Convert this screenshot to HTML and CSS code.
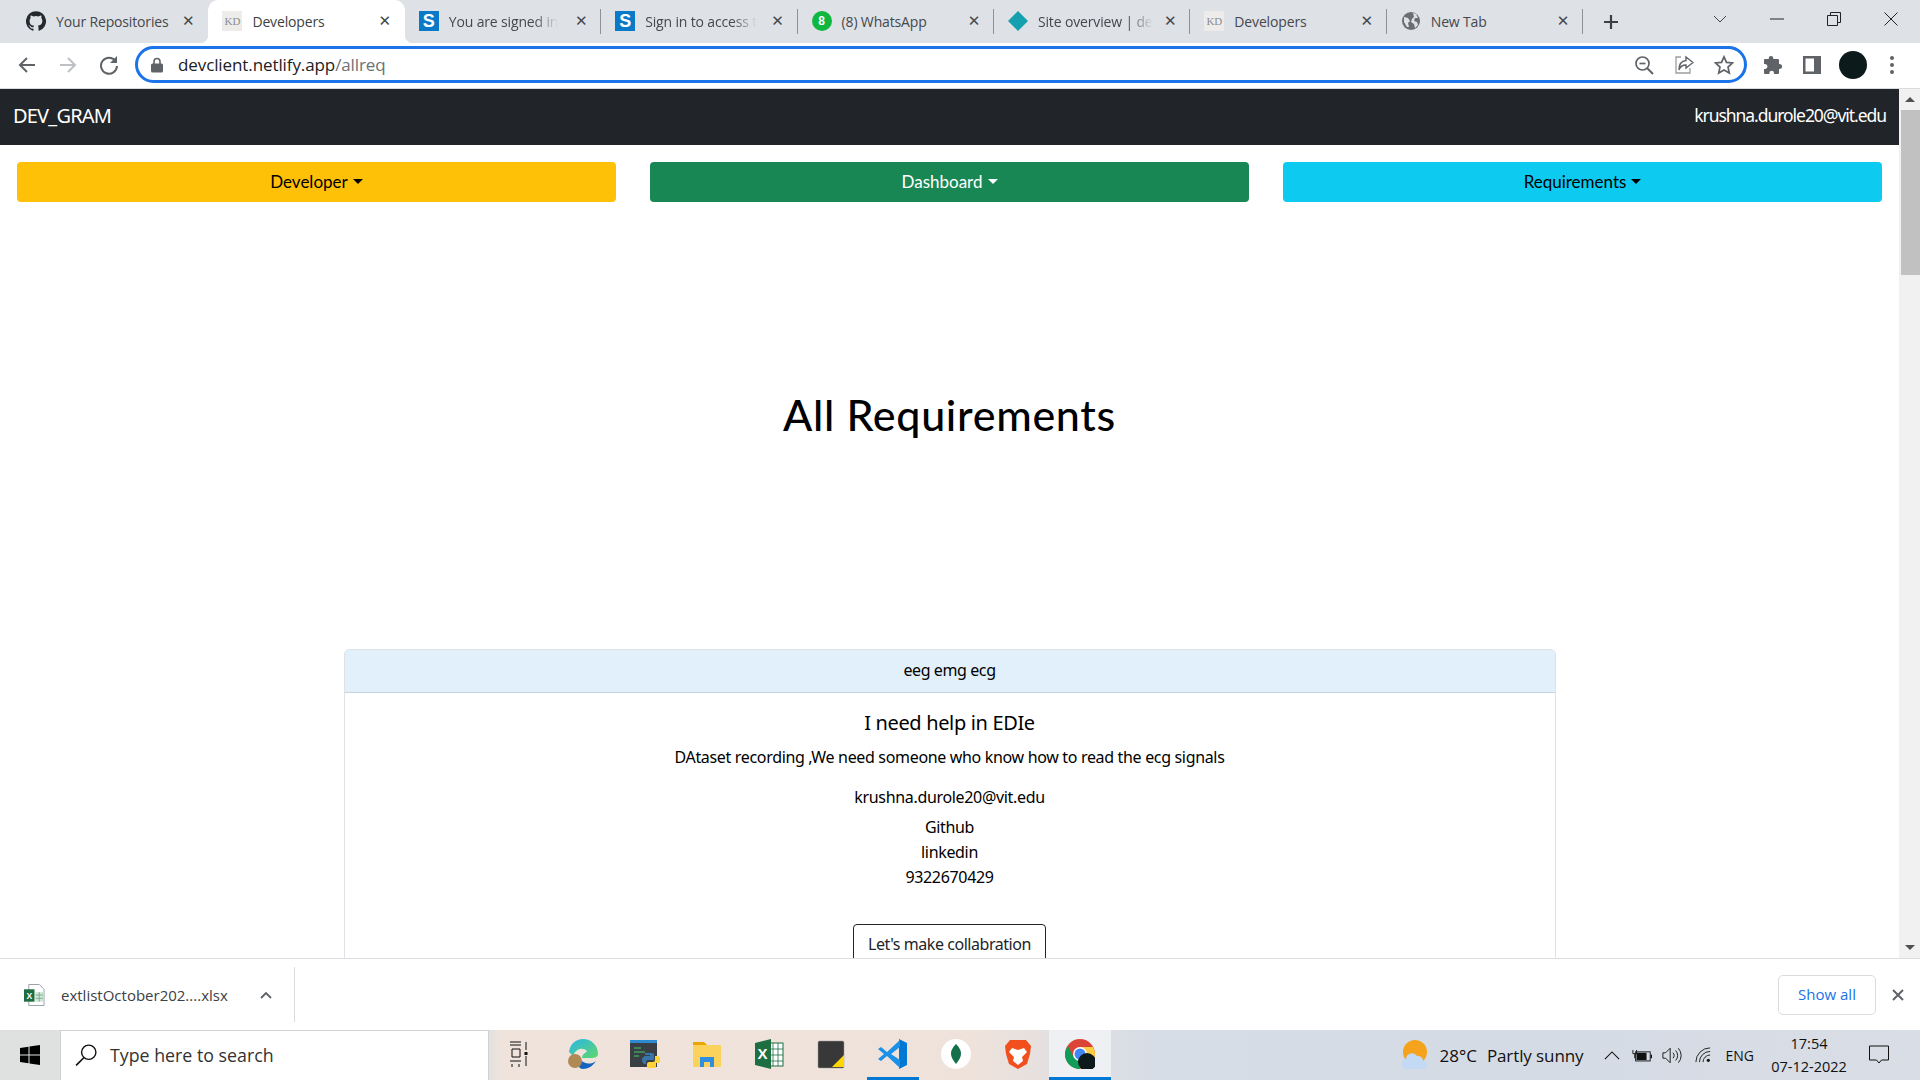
FILE: index.html
```html
<!DOCTYPE html>
<html lang="en">
<head>
<meta charset="utf-8">
<title>Developers</title>
<link rel="stylesheet" href="styles.css">
</head>
<body>
<div class="screen">
  <header class="tabstrip">
    <div class="tab">
      <svg class="fav" viewBox="0 0 24 24"><path fill="#24292e" d="M12 .3a12 12 0 0 0-3.800 23.400c.6.100.8-.3.8-.6v-2c-3.300.7-4-1.600-4-1.600-.6-1.400-1.400-1.800-1.400-1.800-1-.7.1-.7.1-.7 1.200 0 1.900 1.200 1.900 1.200 1 1.800 2.800 1.300 3.500 1 0-.8.4-1.300.7-1.600-2.700-.3-5.500-1.300-5.500-6 0-1.200.5-2.300 1.300-3.100-.2-.4-.6-1.600 0-3.200 0 0 1-.3 3.400 1.200a11.500 11.500 0 0 1 6 0c2.300-1.500 3.300-1.200 3.300-1.200.6 1.600.2 2.800 0 3.200.9.8 1.300 1.900 1.300 3.200 0 4.600-2.800 5.600-5.500 5.900.5.4.9 1 .9 2.200v3.300c0 .3.1.7.8.6A12 12 0 0 0 12 .3"/></svg>
      <span class="tab-title">Your Repositories</span><span class="tab-x">✕</span>
    </div>
    <div class="tab active">
      <span class="fav fav-kd">KD</span>
      <span class="tab-title">Developers</span><span class="tab-x">✕</span>
    </div>
    <div class="tab sep">
      <span class="fav fav-s">S</span>
      <span class="tab-title fade">You are signed in</span><span class="tab-x">✕</span>
    </div>
    <div class="tab sep">
      <span class="fav fav-s">S</span>
      <span class="tab-title fade">Sign in to access t</span><span class="tab-x">✕</span>
    </div>
    <div class="tab sep">
      <span class="fav fav-wa">8</span>
      <span class="tab-title">(8) WhatsApp</span><span class="tab-x">✕</span>
    </div>
    <div class="tab sep">
      <svg class="fav" viewBox="0 0 20 20"><polygon fill="#15a0b0" points="10,0 20,10 10,20 0,10"/></svg>
      <span class="tab-title fade">Site overview | de</span><span class="tab-x">✕</span>
    </div>
    <div class="tab sep">
      <span class="fav fav-kd">KD</span>
      <span class="tab-title">Developers</span><span class="tab-x">✕</span>
    </div>
    <div class="tab sep">
      <svg class="fav" viewBox="0 0 20 20"><circle cx="10" cy="10" r="9" fill="#6b6f74"/><path fill="#dee1e6" d="M3 6l4 1 2 3-2 2 1 4-2 0-3-5zM12 2l3 1 2 4-3 0-1 3 3 1 1 3-3 3-1-4-3-2 1-3 2-2z"/></svg>
      <span class="tab-title">New Tab</span><span class="tab-x">✕</span>
    </div>
    <span class="new-tab">
      <svg class="ico-16" viewBox="0 0 16 16"><path d="M8 1v14M1 8h14" stroke="#3c4043" stroke-width="2.200" fill="none"/></svg>
    </span>
    <div class="win-controls">
      <svg class="win-ico" viewBox="0 0 14 14"><path d="M1 4l6 6 6-6" fill="none" stroke="#444" stroke-width="1"/></svg>
      <svg class="win-ico" viewBox="0 0 14 14"><path d="M0 7h14" fill="none" stroke="#222" stroke-width="1"/></svg>
      <svg class="win-ico" viewBox="0 0 14 14"><path d="M.5 3.500h10v10H.5zM3.500 3.500v-3h10v10h-3" fill="none" stroke="#222" stroke-width="1"/></svg>
      <svg class="win-ico" viewBox="0 0 14 14"><path d="M.5.5l13 13M13.500.5l-13 13" fill="none" stroke="#222" stroke-width="1"/></svg>
    </div>
  </header>

  <div class="toolbar">
    <svg class="tool back" viewBox="0 0 20 20"><path d="M18 10H3M10 3l-7 7 7 7" fill="none" stroke="#5f6368" stroke-width="2"/></svg>
    <svg class="tool fwd" viewBox="0 0 20 20"><path d="M2 10h15M10 3l7 7-7 7" fill="none" stroke="#bdc1c6" stroke-width="2"/></svg>
    <svg class="tool reload" viewBox="0 0 20 20"><path d="M16.500 6A8 8 0 1 0 18 11" fill="none" stroke="#5f6368" stroke-width="2"/><path d="M18 1v7h-7z" fill="#5f6368"/></svg>
    <div class="omnibox">
      <svg class="lock" viewBox="0 0 12 16"><path d="M3 7V4.500a3 3 0 0 1 6 0V7" fill="none" stroke="#5f6368" stroke-width="1.600"/><rect y="6.500" width="12" height="9" rx="1.500" fill="#5f6368"/></svg>
      <span class="url">devclient.netlify.app<span class="url-path">/allreq</span></span>
      <svg class="omni-ico" viewBox="0 0 20 20"><circle cx="8.500" cy="8.500" r="6.500" fill="none" stroke="#5f6368" stroke-width="1.700"/><path d="M13 13l6 6" stroke="#5f6368" stroke-width="2"/><path d="M5.500 8.500h6" stroke="#5f6368" stroke-width="1.700"/></svg>
      <svg class="omni-ico" viewBox="0 0 20 20"><path d="M7 2H2v16h14v-5" fill="none" stroke="#9a9da1" stroke-width="1.300"/><path d="M12 2l7 5.500-7 5.500V10c-4 0-6 2-7 5 0-5 2-9 7-9.500z" fill="none" stroke="#5f6368" stroke-width="1.400"/></svg>
      <svg class="omni-ico" viewBox="0 0 20 20"><path d="M10 1.800l2.500 5.600 6 .6-4.500 4 1.300 6L10 15l-5.300 3 1.300-6-4.500-4 6-.6z" fill="none" stroke="#5f6368" stroke-width="1.700"/></svg>
    </div>
    <svg class="tool puzzle" viewBox="0 0 20 20"><path fill="#5f6368" d="M8 1a2.300 2.300 0 0 1 2.300 2.300V4H15a1 1 0 0 1 1 1v4h.7a2.500 2.500 0 0 1 0 5H16v4a1 1 0 0 1-1 1h-4v-1a2.300 2.300 0 0 0-4.600 0v1H2a1 1 0 0 1-1-1v-4h1a2.500 2.500 0 0 0 0-5H1V5a1 1 0 0 1 1-1h3.700v-.7A2.300 2.300 0 0 1 8 1z"/></svg>
    <svg class="tool panel" viewBox="0 0 20 20"><path fill="#5f6368" d="M1 1h18v18H1zM3.500 3.500v13H12v-13z" fill-rule="evenodd"/></svg>
    <span class="avatar"></span>
    <svg class="tool dots" viewBox="0 0 6 20"><circle cx="3" cy="3" r="2" fill="#5f6368"/><circle cx="3" cy="10" r="2" fill="#5f6368"/><circle cx="3" cy="17" r="2" fill="#5f6368"/></svg>
  </div>

  <div class="viewport">
    <main class="page">
      <nav class="navbar">
        <span class="brand">DEV_GRAM</span>
        <span class="nav-user">krushna.durole20@vit.edu</span>
      </nav>
      <div class="menu-row">
        <button class="menu-btn yellow">Developer<i class="caret"></i></button>
        <button class="menu-btn green">Dashboard<i class="caret"></i></button>
        <button class="menu-btn cyan">Requirements<i class="caret"></i></button>
      </div>
      <h1 class="page-title">All Requirements</h1>
      <section class="card">
        <div class="card-head">eeg emg ecg</div>
        <div class="card-body">
          <h5 class="card-title">I need help in EDIe</h5>
          <p class="card-desc">DAtaset recording ,We need someone who know how to read the ecg signals</p>
          <p class="card-mail">krushna.durole20@vit.edu</p>
          <p class="card-line">Github</p>
          <p class="card-line">linkedin</p>
          <p class="card-line">9322670429</p>
          <button class="collab">Let's make collabration</button>
        </div>
      </section>
    </main>
    <div class="scrollbar">
      <span class="sb-btn"><i class="sb-up"></i></span>
      <span class="sb-thumb"></span>
      <span class="sb-track"></span>
      <span class="sb-btn"><i class="sb-down"></i></span>
    </div>
  </div>

  <div class="downloads">
    <svg class="xl-file" viewBox="0 0 22 24"><path d="M5 1h11l5 5v17H5z" fill="#fff" stroke="#9aa0a6"/><path d="M12 9h8v10h-8z" fill="#cfe6d6"/><path d="M12 12h8M12 15.500h8M16 9v10" stroke="#7fb08f"/><rect y="6" width="11" height="13" fill="#1d6f42"/><text x="5.500" y="16" class="xl-x">X</text></svg>
    <span class="dl-name">extlistOctober202....xlsx</span>
    <svg class="dl-chev" viewBox="0 0 12 8"><path d="M1 7l5-5 5 5" fill="none" stroke="#5f6368" stroke-width="1.800"/></svg>
    <span class="dl-sep"></span>
    <button class="show-all">Show all</button>
    <svg class="dl-close" viewBox="0 0 12 12"><path d="M1 1l10 10M11 1L1 11" stroke="#5f6368" stroke-width="2"/></svg>
  </div>

  <footer class="taskbar">
    <svg class="start" viewBox="0 0 20 20"><path fill="#000" d="M0 3l8.500-1.300V9.500H0zM9.500 1.500L20 0v9.500H9.500zM0 10.500h8.500v7.800L0 17zM9.500 10.500H20V20L9.500 18.500z"/></svg>
    <div class="search">
      <svg class="search-ico" viewBox="0 0 20 20"><circle cx="12.500" cy="7.500" r="6.500" fill="none" stroke="#111" stroke-width="1.300"/><path d="M8 12.500L1 19.500" stroke="#111" stroke-width="1.500"/></svg>
      <span>Type here to search</span>
    </div>
    <div class="task-icons">
      <span class="task first"><svg class="tb" viewBox="0 0 20 30"><path d="M1 3h11M1 6h11M3 10h8v8H3zM1 22h11M3 25v3M10 25v3M17 3v8M17 17v10" stroke="#111" stroke-width="1" fill="none"/><rect x="15.500" y="13" width="3" height="3" fill="#111"/></svg></span>
      <span class="task"><svg class="tb" viewBox="0 0 30 30"><defs><linearGradient id="eg" x1="0" y1="0" x2="1" y2="1"><stop offset="0" stop-color="#29b6e8"/><stop offset="1" stop-color="#5fd86b"/></linearGradient></defs><path fill="url(#eg)" d="M1 13C2 5 8 0 15 0c8 0 15 6 15 15 0 3-3 4-7 4h-9c0-4 4-5 5-7-4-4-11-3-14 5z"/><path fill="#1565c0" d="M13 21c3 4 10 5 15 1-3 5-8 8-13 8-2 0-3-1-4-2z"/><circle cx="7" cy="22" r="7" fill="#b08a55"/></svg></span>
      <span class="task"><svg class="tb" viewBox="0 0 30 30"><rect y="1" width="27" height="27" fill="#3a3f44"/><rect y="1" width="27" height="3" fill="#2b8ad0"/><path d="M4 9h7M4 13h11M4 17h5" stroke="#3f9f5f" stroke-width="1.500"/><path fill="#3776ab" d="M15 14h7a2 2 0 0 1 2 2v5h-6a2 2 0 0 0-2 2v2h-2a4 4 0 0 1-2-4c0-3 2-4 4-4h4v-1h-5z"/><path fill="#ffd43b" d="M18 29h6a2 2 0 0 0 2-2v-3h2c2 0 2-2 2-4 0-2-1-3-3-3h-2v4a2 2 0 0 1-2 2h-4a2 2 0 0 0-2 2v3z"/></svg></span>
      <span class="task"><svg class="tb" viewBox="0 0 30 30"><path fill="#e8a600" d="M1 3h11l3 3H1z"/><rect x="1" y="6" width="28" height="22" rx="1" fill="#fbd35c"/><path fill="#2f8ee0" d="M8 28V18h14v10h-4v-5h-6v5z"/></svg></span>
      <span class="task"><svg class="tb" viewBox="0 0 30 30"><rect x="14" y="4" width="15" height="23" fill="#fff" stroke="#1d6f42"/><path d="M19 4v23M24 4v23M14 10h15M14 16h15M14 22h15" stroke="#1d6f42" stroke-width=".8"/><path fill="#1d6f42" d="M1 4L17 0v30L1 26z"/><text x="8.500" y="20" class="xl-big">X</text></svg></span>
      <span class="task"><svg class="tb" viewBox="0 0 30 30"><rect x="2" y="2" width="26" height="27" rx="1.500" fill="#383838" stroke="#999" stroke-width=".5"/><path fill="#ffd600" d="M16 28h12V16z"/></svg></span>
      <span class="task running"><svg class="tb" viewBox="0 0 30 30"><path fill="#0078d4" d="M21 0l8 4v22l-8 4z"/><path fill="#1a90e8" d="M22 1L9 13 3 8 0 10l6 5-6 5 3 2 6-5 13 12V21l-9-6 9-7z"/></svg></span>
      <span class="task"><svg class="tb" viewBox="0 0 30 30"><circle cx="15" cy="15" r="15" fill="#fff"/><path fill="#13704a" d="M15 5c4 4 5 7 5 10s-2 6-5 10c-3-4-5-7-5-10s1-6 5-10z"/></svg></span>
      <span class="task"><svg class="tb" viewBox="0 0 30 30"><path fill="#f1501e" d="M7 1h16l5 6-1 8-3 10-9 5-9-5L3 15 2 7z"/><path fill="#fff" d="M9 9l6 2 6-2 3 4-5 5 1 4-5 4-5-4 1-4-5-5z"/></svg></span>
      <span class="task current"><svg class="tb" viewBox="0 0 30 30"><circle cx="15" cy="15" r="15" fill="#db4437"/><path fill="#0f9d58" d="M0 15c0 8 6 15 15 15l6-11H9L3 7a15 15 0 0 0-3 8z"/><path fill="#ffcd40" d="M15 30a15 15 0 0 0 15-15c0-3-1-5-2-7H15l6 11z"/><circle cx="15" cy="15" r="7" fill="#fff"/><circle cx="15" cy="15" r="5.500" fill="#4285f4"/><circle cx="22" cy="23" r="9" fill="#0c1a1c"/></svg></span>
    </div>
    <div class="tray">
      <svg class="weather" viewBox="0 0 28 30"><circle cx="14" cy="12" r="12" fill="#f5a31c"/><path fill="#c4daf4" d="M6 29a5 5 0 0 1-1-10 6 6 0 0 1 11-3 5 5 0 0 1 6 5 4 4 0 0 1 0 8z"/></svg>
      <span class="temp">28°C</span>
      <span class="wtext">Partly sunny</span>
      <svg class="tray-caret" viewBox="0 0 18 10"><path d="M1 9l8-8 8 8" fill="none" stroke="#111" stroke-width="1.200"/></svg>
      <svg class="tray-bat" viewBox="0 0 22 14"><path d="M1 1v4h4V1M3 5v5" stroke="#111" fill="none"/><rect x="4" y="3" width="16" height="10" fill="none" stroke="#111"/><rect x="5" y="4" width="11" height="8" fill="#111"/><rect x="20.500" y="6" width="1.500" height="4" fill="#111"/></svg>
      <svg class="tray-vol" viewBox="0 0 22 18"><path d="M1 6h3l5-5v16l-5-5H1z" fill="none" stroke="#111"/><path d="M12 6a4 4 0 0 1 0 6M15 3.500a8 8 0 0 1 0 11M18 1a12 12 0 0 1 0 16" fill="none" stroke="#111"/></svg>
      <svg class="tray-wifi" viewBox="0 0 18 18"><path d="M1 17A16 16 0 0 1 17 1M5 17A12 12 0 0 1 17 5M9 17a8 8 0 0 1 8-8" fill="none" stroke="#111"/><circle cx="15" cy="15" r="1.800" fill="#111"/></svg>
      <span class="eng">ENG</span>
      <div class="clock"><span>17:54</span><span>07-12-2022</span></div>
      <svg class="notif" viewBox="0 0 20 20"><path d="M.5 1h19v14h-7l-2.500 3-2.500-3h-7z" fill="none" stroke="#111"/></svg>
    </div>
  </footer>
</div>
</body>
</html>
```

FILE: styles.css
```css
* { box-sizing: border-box; }
html, body { margin: 0; height: 100%; overflow: hidden; background: #fff; }
body { font-family: "Open Sans", "Noto Sans", sans-serif; color: #000; }
svg { display: block; flex: none; }
button { font: inherit; cursor: pointer; }

.screen { width: 1920px; height: 1080px; display: flex; flex-direction: column; overflow: hidden; }

/* tab strip */
.tabstrip { height: 43px; background: #dee1e6; display: flex; align-items: stretch; padding-left: 12px; flex: none; }
.tab { width: 196.400px; display: flex; align-items: center; padding: 0 10px 1px 14px; font-size: 14px; letter-spacing: -.15px; color: #45484c; position: relative; flex: none; }
.tab.sep::after { content: ""; position: absolute; right: 0; top: 9px; height: 25px; width: 1px; background: #8e9196; }
.tab.active { background: #fff; border-radius: 10px 10px 0 0; color: #3c3f43; }
.tab.active::before, .tab.active::after { content: ""; position: absolute; bottom: 0; width: 8px; height: 8px; }
.tab.active::before { left: -8px; background: radial-gradient(circle at 0 0, transparent 8px, #fff 8.500px); }
.tab.active::after { right: -8px; background: radial-gradient(circle at 100% 0, transparent 8px, #fff 8.500px); }
.fav { width: 20px; height: 20px; flex: none; display: flex; align-items: center; justify-content: center; }
.fav-kd { background: #eeecea; color: #8a8d92; font-family: "Liberation Serif", serif; font-size: 11px; letter-spacing: 0; }
.fav-s { background: #0a79c7; color: #fff; font-family: "Liberation Sans", sans-serif; font-weight: 700; font-size: 18px; letter-spacing: 0; }
.fav-wa { background: #0fb63f; color: #fff; border-radius: 50%; font-family: "Liberation Sans", sans-serif; font-weight: 700; font-size: 12px; letter-spacing: 0; }
.tab-title { margin-left: 10px; white-space: nowrap; flex: none; }
.tab-title.fade { -webkit-mask-image: linear-gradient(90deg, #000 78%, transparent 100%); mask-image: linear-gradient(90deg, #000 78%, transparent 100%); }
.tab-x { margin-left: auto; width: 20px; text-align: center; font-family: "DejaVu Sans", sans-serif; font-size: 15px; font-weight: 700; color: #45484c; letter-spacing: 0; }
.new-tab { width: 56px; display: flex; align-items: center; justify-content: center; }
.ico-16 { width: 16px; height: 16px; }
.win-controls { margin-left: auto; display: flex; align-items: center; gap: 43px; padding: 0 22px 6px 0; }
.win-ico { width: 14px; height: 14px; }

/* toolbar */
.toolbar { height: 46px; background: #fff; border-bottom: 1px solid #dadce0; display: flex; align-items: center; padding: 0 0 2px 17px; flex: none; }
.tool { width: 20px; height: 20px; }
.back { margin-right: 21px; }
.fwd { margin-right: 21px; }
.omnibox { width: 1612px; height: 37px; margin-left: 16px; border: 3px solid #1a73e8; border-radius: 19px; display: flex; align-items: center; padding: 0 0 0 13px; }
.lock { width: 12px; height: 16px; margin-right: 15px; }
.url { font-size: 17px; color: #202124; flex: 1; letter-spacing: -.1px; }
.url-path { color: #6e7175; }
.omni-ico { width: 20px; height: 20px; margin-right: 20px; }
.omni-ico:last-child { margin-right: 10px; }
.puzzle { margin-left: 16px; }
.panel { margin-left: 19px; }
.avatar { width: 28px; height: 28px; border-radius: 50%; background: #0c1a1c; margin-left: 17px; }
.dots { width: 6px; margin-left: 22px; }

/* page */
.viewport { flex: 1; display: flex; min-height: 0; border-bottom: 1px solid #dadce0; }
.page { flex: 1; min-width: 0; overflow: hidden; font-family: "Noto Sans", sans-serif; }
.navbar { height: 56px; background: #212529; color: #fff; display: flex; align-items: center; justify-content: space-between; padding: 0 13px 4px; }
.brand { font-size: 20px; letter-spacing: -.8px; }
.nav-user { font-size: 17.500px; letter-spacing: -1.05px; }
.menu-row { display: grid; grid-template-columns: repeat(3, 599px); gap: 34px; padding: 17px 16px 0 17px; }
.menu-btn { height: 40px; border: 0; border-radius: 4px; padding: 0 0 2px; font-family: "Lato", sans-serif; font-size: 17px; display: flex; align-items: center; justify-content: center; }
.yellow { background: #ffc107; color: #000; }
.green { background: #198754; color: #fff; }
.cyan { background: #0dcaf0; color: #000; }
.caret { width: 0; height: 0; margin-left: 5px; border: 5.500px solid transparent; border-top-color: currentColor; border-bottom: 0; }
.page-title { margin: 186px 0 0; text-align: center; font-family: "Lato", sans-serif; font-weight: 500; font-size: 43px; line-height: 54px; height: 54px; letter-spacing: .7px; }
.card { width: 1212px; margin: 207px auto 0; border: 1px solid #dfe3e6; border-radius: 5px 5px 0 0; }
.card-head { height: 43px; background: #e2f0fb; border-bottom: 1px solid #c6d4de; text-align: center; font-size: 16px; line-height: 41px; letter-spacing: -.4px; border-radius: 4px 4px 0 0; }
.card-body { text-align: center; padding-top: 16px; font-size: 16px; letter-spacing: -.33px; }
.card-title { margin: 0 0 8px; font-size: 20px; font-weight: 400; line-height: 28px; letter-spacing: -.35px; }
.card-desc { margin: 0 0 16px; line-height: 24px; }
.card-mail { margin: 0 0 6px; line-height: 24px; }
.card-line { margin: 0; line-height: 25px; }
.collab { margin-top: 34px; width: 193px; height: 50px; background: #fff; border: 1px solid #212529; border-radius: 4px; color: #212529; font-family: "Noto Sans", sans-serif; font-size: 16px; letter-spacing: -.45px; padding: 8px 0 0; display: inline-flex; justify-content: center; align-items: flex-start; }
.scrollbar { width: 21px; background: #f1f1f1; display: flex; flex-direction: column; flex: none; }
.sb-btn { height: 21px; display: flex; align-items: center; justify-content: center; flex: none; }
.sb-up, .sb-down { width: 0; height: 0; border: 5px solid transparent; }
.sb-up { border-top: 0; border-bottom-color: #505050; }
.sb-down { border-bottom: 0; border-top-color: #505050; }
.sb-thumb { height: 165px; margin-left: 2px; background: #c1c1c1; flex: none; }
.sb-track { flex: 1; }

/* downloads */
.downloads { height: 71px; background: #fff; display: flex; align-items: center; padding-left: 24px; flex: none; }
.xl-file { width: 21px; height: 24px; }
.xl-x { font: 700 9px "Liberation Sans", sans-serif; fill: #fff; text-anchor: middle; }
.xl-big { font: 700 15px "Liberation Sans", sans-serif; fill: #fff; text-anchor: middle; }
.dl-name { margin-left: 16px; width: 199px; font-size: 15px; color: #3c4043; letter-spacing: 0; white-space: nowrap; }
.dl-chev { width: 12px; height: 8px; }
.dl-sep { width: 1px; height: 55px; background: #dadce0; margin-left: 22px; }
.show-all { margin-left: auto; width: 98px; height: 40px; background: #fff; border: 1px solid #dadce0; border-radius: 5px; color: #1a73e8; font-size: 15px; padding: 0 0 2px; }
.dl-close { width: 12px; height: 12px; margin: 0 16px; }

/* taskbar */
.taskbar { height: 50px; background: linear-gradient(90deg, #dfe1e1 0, #e2e2e2 490px, #efe3dc 500px, #eee2db 980px, #d6dde6 1150px, #d4dbe4 1500px, #d9dde6 100%); display: flex; align-items: stretch; flex: none; }
.start { width: 20px; height: 20px; margin: 15px 20px 0; }
.search { width: 429px; background: #fff; border: 1px solid #cfd1d3; border-bottom: 0; display: flex; align-items: center; padding: 0 0 2px 14px; font-size: 17.800px; color: #333; }
.search-ico { width: 22px; height: 22px; margin-right: 13px; }
.task-icons { display: flex; align-items: stretch; }
.task { width: 62.100px; display: flex; align-items: center; justify-content: center; border-bottom: 3px solid transparent; }
.task.first { width: 60px; margin-right: 3px; }
.tb { width: 30px; height: 30px; }
.task.first .tb { width: 20px; }
.task.running { width: 52px; margin: 0 5px; border-bottom-color: #0078d4; }
.task.current { background: #eef0f4; border-bottom-color: #0078d4; }
.tray { margin-left: auto; display: flex; align-items: center; padding-right: 31px; color: #111; }
.weather { width: 28px; height: 30px; }
.temp { margin-left: 10px; font-size: 17px; }
.wtext { margin-left: 10px; font-size: 17px; letter-spacing: -.1px; }
.tray-caret { width: 16px; height: 9px; margin-left: 20px; }
.tray-bat { width: 20px; height: 13px; margin-left: 12px; }
.tray-vol { width: 20px; height: 17px; margin-left: 10px; }
.tray-wifi { width: 16px; height: 16px; margin-left: 13px; }
.eng { margin-left: 15px; font-size: 14px; }
.clock { width: 80px; margin-left: 15px; display: flex; flex-direction: column; align-items: center; font-size: 14.500px; line-height: 23px; }
.notif { width: 20px; height: 20px; margin-left: 20px; }
```
